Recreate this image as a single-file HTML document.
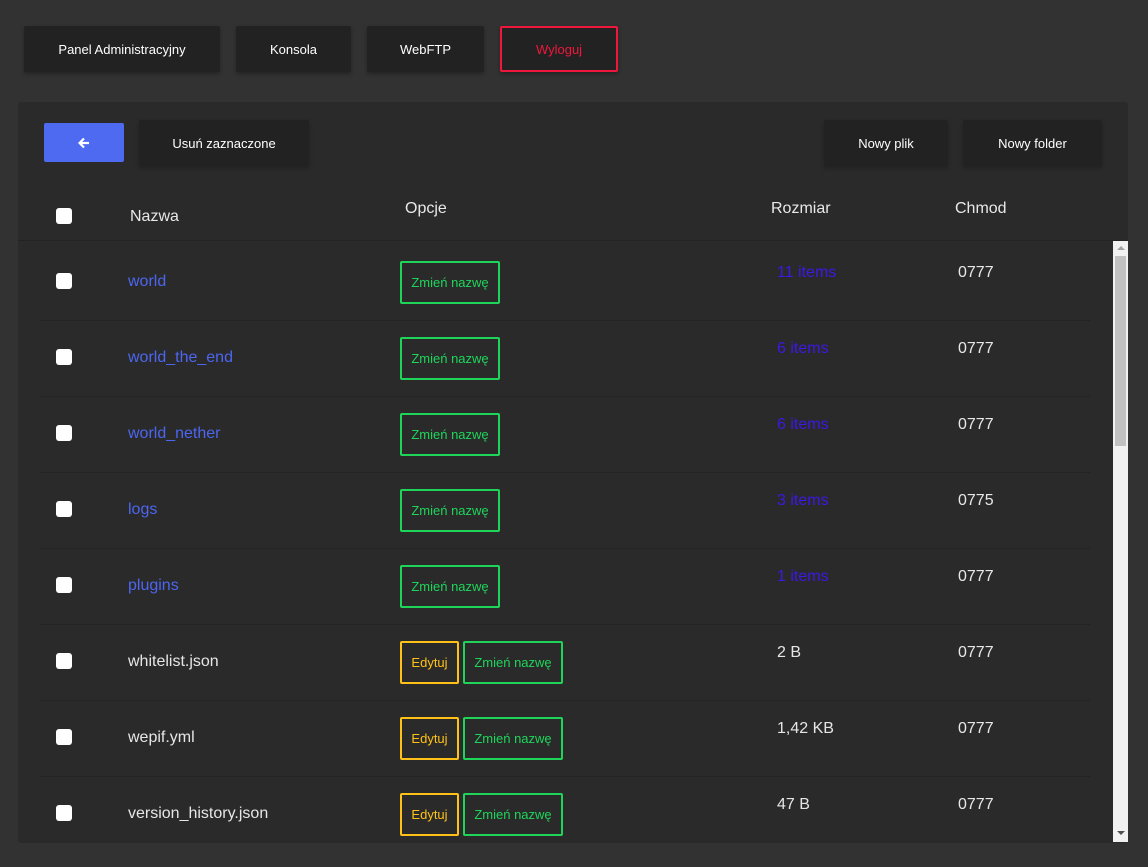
<!DOCTYPE html>
<html><head><meta charset="utf-8"><style>
*{box-sizing:border-box;margin:0;padding:0}
body{width:1148px;height:867px;background:#323232;font-family:"Liberation Sans",Roboto,sans-serif;position:relative;overflow:hidden;color:#e6e6e6}
.a{position:absolute}
.nb{position:absolute;top:26px;height:46px;background:#222;box-shadow:0 2px 4px rgba(0,0,0,.3);color:#fff;font-size:13px;display:flex;align-items:center;justify-content:center;border-radius:2px}
.panel{position:absolute;left:18px;top:102px;width:1110px;height:741px;background:#2a2a2a;border-radius:3px}
.tb{position:absolute;height:46px;background:#222;color:#fff;font-size:13px;display:flex;align-items:center;justify-content:center;box-shadow:0 2px 4px rgba(0,0,0,.25);border-radius:2px}
.cb{position:absolute;left:56px;width:16px;height:16px;background:#fff;border-radius:3px}
.h{position:absolute;font-size:16px;color:#e8e8e8}
.nm{position:absolute;left:128px;font-size:16px;margin-top:2px}
.btn{position:absolute;height:43px;border:2px solid;border-radius:2px;font-size:13px;display:flex;align-items:center;justify-content:center}
.g{border-color:#1ed55a;color:#1ed55a;width:100px;left:400px}
.g2{border-color:#1ed55a;color:#1ed55a;width:100px;left:463px}
.y{border-color:#ffc118;color:#ffc118;width:59px;left:400px}
.sz{position:absolute;left:777px;font-size:16px;margin-top:1px}
.ch{position:absolute;left:958px;font-size:16px;color:#e8e8e8;margin-top:1px}
.sep{position:absolute;left:40px;width:1050px;height:1px;background:#232323}
</style></head><body>
<div class="nb" style="left:24px;width:196px">Panel Administracyjny</div>
<div class="nb" style="left:236px;width:115px">Konsola</div>
<div class="nb" style="left:367px;width:117px">WebFTP</div>
<div class="nb" style="left:500px;width:118px;border:2px solid #f0173c;color:#f0173c">Wyloguj</div>
<div class="panel"></div>
<div class="tb" style="left:44px;top:123px;width:80px;height:39px;background:#4e6af0;box-shadow:none"><svg width="12" height="12" viewBox="0 0 12 12"><path d="M11 6H2M6 1.5L1.5 6 6 10.5" stroke="#fff" stroke-width="2.2" fill="none"/></svg></div>
<div class="tb" style="left:139px;top:120px;width:170px">Usuń zaznaczone</div>
<div class="tb" style="left:824px;top:120px;width:124px">Nowy plik</div>
<div class="tb" style="left:963px;top:120px;width:139px">Nowy folder</div>
<div class="cb" style="top:208px"></div>
<div class="h" style="left:130px;top:208px">Nazwa</div>
<div class="h" style="left:405px;top:200px">Opcje</div>
<div class="h" style="left:771px;top:200px">Rozmiar</div>
<div class="h" style="left:955px;top:200px">Chmod</div>
<div class="a" style="left:18px;top:240px;width:1110px;height:1px;background:#232323"></div>

<div class="cb" style="top:273px"></div><div class="nm" style="top:271px;color:#4c66f0">world</div><div class="btn g" style="top:261px">Zmień nazwę</div><div class="sz" style="top:263px;color:#3d18e6">11 items</div><div class="ch" style="top:263px">0777</div><div class="sep" style="top:320px"></div>
<div class="cb" style="top:349px"></div><div class="nm" style="top:347px;color:#4c66f0">world_the_end</div><div class="btn g" style="top:337px">Zmień nazwę</div><div class="sz" style="top:339px;color:#3d18e6">6 items</div><div class="ch" style="top:339px">0777</div><div class="sep" style="top:396px"></div>
<div class="cb" style="top:425px"></div><div class="nm" style="top:423px;color:#4c66f0">world_nether</div><div class="btn g" style="top:413px">Zmień nazwę</div><div class="sz" style="top:415px;color:#3d18e6">6 items</div><div class="ch" style="top:415px">0777</div><div class="sep" style="top:472px"></div>
<div class="cb" style="top:501px"></div><div class="nm" style="top:499px;color:#4c66f0">logs</div><div class="btn g" style="top:489px">Zmień nazwę</div><div class="sz" style="top:491px;color:#3d18e6">3 items</div><div class="ch" style="top:491px">0775</div><div class="sep" style="top:548px"></div>
<div class="cb" style="top:577px"></div><div class="nm" style="top:575px;color:#4c66f0">plugins</div><div class="btn g" style="top:565px">Zmień nazwę</div><div class="sz" style="top:567px;color:#3d18e6">1 items</div><div class="ch" style="top:567px">0777</div><div class="sep" style="top:624px"></div>
<div class="cb" style="top:653px"></div><div class="nm" style="top:651px">whitelist.json</div><div class="btn y" style="top:641px">Edytuj</div><div class="btn g2" style="top:641px">Zmień nazwę</div><div class="sz" style="top:643px">2 B</div><div class="ch" style="top:643px">0777</div><div class="sep" style="top:700px"></div>
<div class="cb" style="top:729px"></div><div class="nm" style="top:727px">wepif.yml</div><div class="btn y" style="top:717px">Edytuj</div><div class="btn g2" style="top:717px">Zmień nazwę</div><div class="sz" style="top:719px">1,42 KB</div><div class="ch" style="top:719px">0777</div><div class="sep" style="top:776px"></div>
<div class="cb" style="top:805px"></div><div class="nm" style="top:803px">version_history.json</div><div class="btn y" style="top:793px">Edytuj</div><div class="btn g2" style="top:793px">Zmień nazwę</div><div class="sz" style="top:795px">47 B</div><div class="ch" style="top:795px">0777</div>

<div class="a" style="left:1113px;top:241px;width:15px;height:601px;background:#f1f1f1"></div>
<div class="a" style="left:1115px;top:256px;width:11px;height:190px;background:#c1c1c1"></div>
<div class="a" style="left:1117px;top:246px;width:0;height:0;border-left:4px solid transparent;border-right:4px solid transparent;border-bottom:4px solid #a3a3a3"></div>
<div class="a" style="left:1117px;top:831px;width:0;height:0;border-left:4px solid transparent;border-right:4px solid transparent;border-top:4px solid #505050"></div>
</body></html>
